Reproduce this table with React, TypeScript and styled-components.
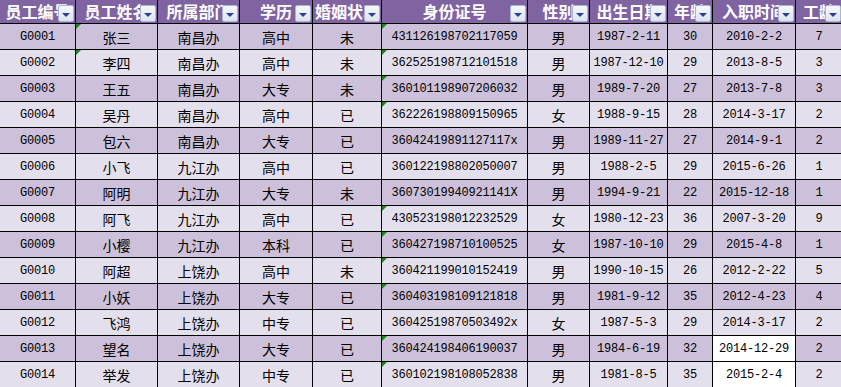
import React from "react";
import styled, { createGlobalStyle, css } from "styled-components";

const GlobalStyle = createGlobalStyle`
  html, body {
    margin: 0;
    padding: 0;
    background: #ffffff;
    overflow: hidden;
  }
`;

type ColKind = "text" | "mono";

interface Col {
  title: string;
  width: number;
  kind: ColKind;
}

const COLS: Col[] = [
  { title: "员工编号", width: 75, kind: "mono" },
  { title: "员工姓名", width: 81, kind: "text" },
  { title: "所属部门", width: 81, kind: "text" },
  { title: "学历", width: 72, kind: "text" },
  { title: "婚姻状况", width: 68, kind: "text" },
  { title: "身份证号", width: 145, kind: "mono" },
  { title: "性别", width: 61, kind: "text" },
  { title: "出生日期", width: 77, kind: "mono" },
  { title: "年龄", width: 44, kind: "mono" },
  { title: "入职时间", width: 82, kind: "mono" },
  { title: "工龄", width: 46, kind: "mono" },
];

const DATA: string[][] = [
  ["G0001", "张三", "南昌办", "高中", "未", "431126198702117059", "男", "1987-2-11", "30", "2010-2-2", "7"],
  ["G0002", "李四", "南昌办", "高中", "未", "362525198712101518", "男", "1987-12-10", "29", "2013-8-5", "3"],
  ["G0003", "王五", "南昌办", "大专", "未", "360101198907206032", "男", "1989-7-20", "27", "2013-7-8", "3"],
  ["G0004", "吴丹", "南昌办", "高中", "已", "362226198809150965", "女", "1988-9-15", "28", "2014-3-17", "2"],
  ["G0005", "包六", "南昌办", "大专", "已", "36042419891127117x", "男", "1989-11-27", "27", "2014-9-1", "2"],
  ["G0006", "小飞", "九江办", "高中", "已", "360122198802050007", "男", "1988-2-5", "29", "2015-6-26", "1"],
  ["G0007", "阿明", "九江办", "大专", "未", "36073019940921141X", "男", "1994-9-21", "22", "2015-12-18", "1"],
  ["G0008", "阿飞", "九江办", "高中", "已", "430523198012232529", "女", "1980-12-23", "36", "2007-3-20", "9"],
  ["G0009", "小樱", "九江办", "本科", "已", "360427198710100525", "女", "1987-10-10", "29", "2015-4-8", "1"],
  ["G0010", "阿超", "上饶办", "高中", "未", "360421199010152419", "男", "1990-10-15", "26", "2012-2-22", "5"],
  ["G0011", "小妖", "上饶办", "大专", "已", "360403198109121818", "男", "1981-9-12", "35", "2012-4-23", "4"],
  ["G0012", "飞鸿", "上饶办", "中专", "已", "36042519870503492x", "女", "1987-5-3", "29", "2014-3-17", "2"],
  ["G0013", "望名", "上饶办", "大专", "已", "360424198406190037", "男", "1984-6-19", "32", "2014-12-29", "2"],
  ["G0014", "举发", "上饶办", "中专", "已", "360102198108052838", "男", "1981-8-5", "35", "2015-2-4", "2"],
];

// cells flagged with Excel's green "number stored as text" marker: "row-col"
const FLAGGED = new Set<string>([
  "0-1", "1-1",
  "0-5", "1-5", "2-5", "3-5", "7-5", "8-5", "9-5", "10-5", "12-5", "13-5",
]);

// cells with a plain white fill
const WHITE = new Set<string>(["12-9", "13-9"]);

const TEMPLATE = COLS.map((c) => `${c.width}px`).join(" ");

const Sheet = styled.div`
  display: grid;
  grid-template-rows: 23px;
  grid-auto-rows: 25px;
  row-gap: 1px;
  background: #000000;
  width: 841px;
  height: 387px;
  overflow: hidden;
`;

const Row = styled.div`
  display: grid;
  grid-template-columns: ${TEMPLATE};
  column-gap: 1px;
  min-width: 0;
`;

const HeaderCell = styled.div`
  position: relative;
  overflow: hidden;
  display: flex;
  align-items: center;
  justify-content: center;
  background: #8064a2;
  color: #ffffff;
  font-family: "Noto Sans CJK SC", "Noto Sans", sans-serif;
  font-weight: 700;
  font-size: 16px;
  line-height: 23px;
  white-space: nowrap;
`;

const FilterButton = styled.span`
  position: absolute;
  right: 1px;
  bottom: 1px;
  width: 16px;
  height: 17px;
  box-sizing: border-box;
  border: 1px solid #a7b6d4;
  border-radius: 2px;
  background: linear-gradient(#f7f8fc, #dde3ef);
  display: flex;
  align-items: center;
  justify-content: center;

  &::after {
    content: "";
    width: 0;
    height: 0;
    margin-top: 2px;
    border-left: 4px solid transparent;
    border-right: 4px solid transparent;
    border-top: 4px solid #2c3f96;
  }
`;

const BodyCell = styled.div<{ $alt: boolean; $mono: boolean; $white: boolean; $flag: boolean }>`
  position: relative;
  overflow: hidden;
  display: flex;
  align-items: center;
  justify-content: center;
  white-space: nowrap;
  color: #000000;
  background: ${(p) => (p.$white ? "#ffffff" : p.$alt ? "#e4dfec" : "#ccc0da")};
  ${(p) =>
    p.$mono
      ? css`
          font-family: "Liberation Mono", "DejaVu Sans Mono", monospace;
          font-size: 12px;
          letter-spacing: -0.2px;
        `
      : css`
          font-family: "Noto Sans CJK SC", "Noto Sans", sans-serif;
          font-size: 14px;
        `}

  ${(p) =>
    p.$flag &&
    css`
      &::before {
        content: "";
        position: absolute;
        left: 0;
        top: 0;
        width: 0;
        height: 0;
        border-top: 5px solid #138a13;
        border-right: 5px solid transparent;
      }
    `}
`;

export default function App() {
  return (
    <>
      <GlobalStyle />
      <Sheet>
        <Row>
          {COLS.map((c) => (
            <HeaderCell key={c.title}>
              {c.title}
              <FilterButton />
            </HeaderCell>
          ))}
        </Row>
        {DATA.map((r, ri) => (
          <Row key={r[0]}>
            {r.map((v, ci) => (
              <BodyCell
                key={ci}
                $alt={ri % 2 === 1}
                $mono={COLS[ci].kind === "mono"}
                $white={WHITE.has(`${ri}-${ci}`)}
                $flag={FLAGGED.has(`${ri}-${ci}`)}
              >
                {v}
              </BodyCell>
            ))}
          </Row>
        ))}
      </Sheet>
    </>
  );
}
